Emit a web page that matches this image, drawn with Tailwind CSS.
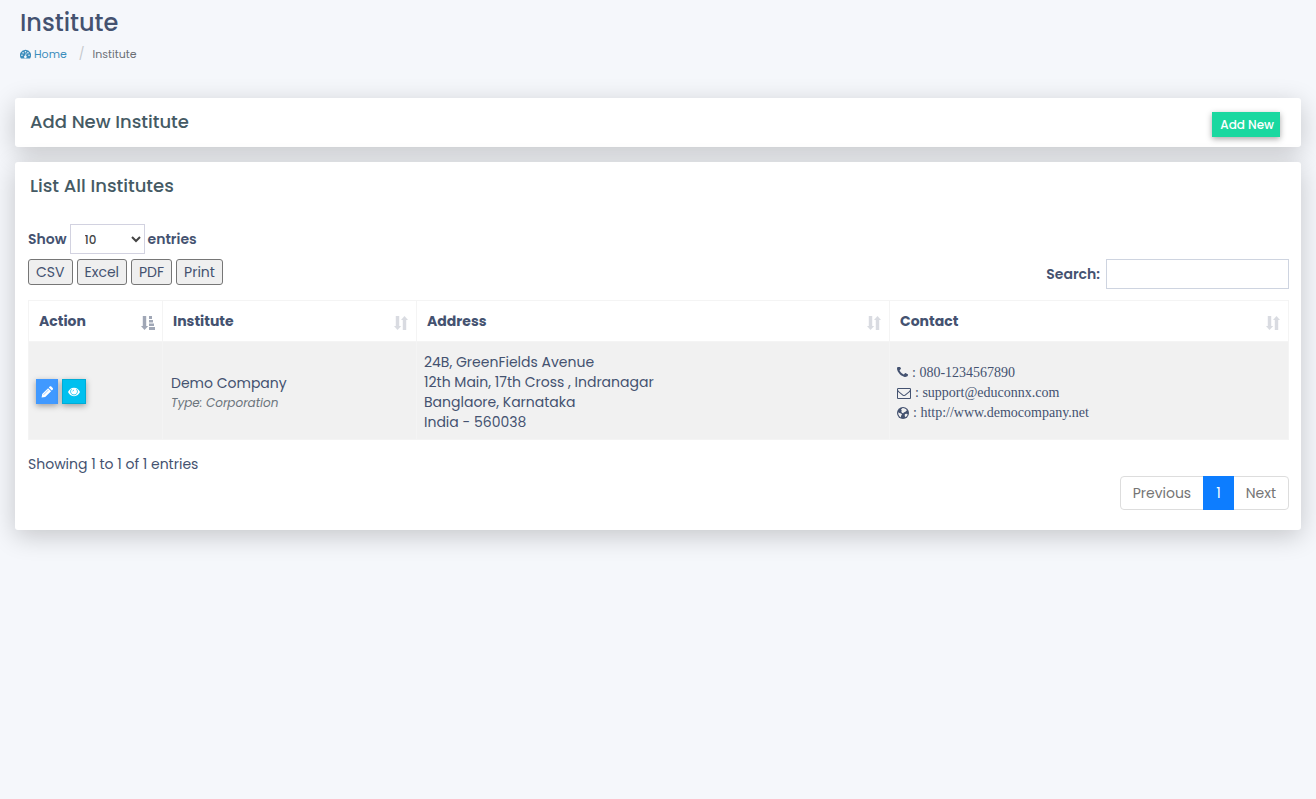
<!DOCTYPE html>
<html lang="en">
<head>
    <meta charset="UTF-8">
    <meta name="viewport" content="width=device-width, initial-scale=1.0">
    <title>Institute</title>
    <script src="https://cdn.jsdelivr.net/npm/@tailwindcss/browser@4"></script>
</head>
<body class="bg-[#f5f7fb] min-h-screen font-['Poppins','Inter',sans-serif] text-sm leading-5 text-[#445270]">
    <!-- Icons used more than once -->
    <svg class="hidden">
        <symbol id="sort" viewBox="0 0 14 14">
            <path d="M1.800 0h3.400v10h2L3.500 14 0 10h1.800zM8.800 14h3.400V4H14L10.500 0 7 4h1.800z"/>
        </symbol>
    </svg>

    <header class="px-5 pt-2 h-[98px]">
        <h1 class="text-2xl leading-[30px] font-medium">Institute</h1>
        <nav class="flex items-center mt-2 text-[11px] leading-4" aria-label="Breadcrumb">
            <a href="#" class="flex items-center gap-[3px] text-[#3c8dbc]">
                <svg class="w-[11px] h-[11px]" viewBox="0 0 14 14">
                    <path fill="currentColor" d="M7 1a7 7 0 0 0-6 10.700c.2.200.4.300.7.300h10.600c.3 0 .5-.1.700-.3A7 7 0 0 0 7 1z"/>
                    <g fill="#f5f7fb">
                        <circle cx="2.500" cy="8" r="1"/><circle cx="3.900" cy="4.900" r="1"/><circle cx="7" cy="3.500" r="1"/>
                        <circle cx="10.100" cy="4.900" r="1"/><circle cx="11.500" cy="8" r="1"/>
                        <path d="M7.400 5.300l1 .2-.7 3a1.700 1.700 0 1 1-1-.2z"/>
                    </g>
                </svg>
                Home
            </a>
            <span class="pl-3 pr-2 text-xs leading-4 text-[#c4c7cc]">/</span>
            <span class="text-[#6b6f76]">Institute</span>
        </nav>
    </header>

    <main class="px-[15px] flex flex-col gap-[15px]">
        <section class="bg-white rounded-[3px] shadow-[0_6px_26px_rgba(0,0,0,0.2)] flex items-start justify-between pl-[15px] pr-[21px] pt-[14px] pb-[10px]">
            <h2 class="text-lg leading-5 font-medium text-[#455a64]">Add New Institute</h2>
            <button class="bg-[#1ad8a0] text-white text-xs leading-[17px] font-medium pl-2 pr-[6px] py-1 shadow-[0_2px_6px_rgba(0,0,0,0.35)]">Add New</button>
        </section>

        <section class="bg-white rounded-[3px] shadow-[0_6px_26px_rgba(0,0,0,0.2)] pl-[13px] pr-3 pt-[14px] pb-5">
            <h2 class="text-lg leading-5 font-medium text-[#455a64] pl-0.5">List All Institutes</h2>

            <label class="flex items-center gap-[3px] mt-7 font-semibold">
                Show
                <select class="w-[75px] h-[30px] border border-[#d2d2e0] bg-white text-xs text-[#444] font-medium pl-[10px]">
                    <option>10</option>
                    <option>25</option>
                    <option>50</option>
                    <option>100</option>
                </select>
                entries
            </label>

            <div class="flex items-start justify-between mt-[5px]">
                <div class="flex gap-1">
                    <button class="h-[26px] px-[7px] border border-[#767676] rounded-[3px] bg-[#efefef]">CSV</button>
                    <button class="h-[26px] px-[7px] border border-[#767676] rounded-[3px] bg-[#efefef]">Excel</button>
                    <button class="h-[26px] px-[7px] border border-[#767676] rounded-[3px] bg-[#efefef]">PDF</button>
                    <button class="h-[26px] px-[7px] border border-[#767676] rounded-[3px] bg-[#efefef]">Print</button>
                </div>
                <label class="flex items-center gap-[6px] font-semibold">
                    Search:
                    <input type="search" class="w-[183px] h-[30px] border border-[#ced4e0] bg-white px-2">
                </label>
            </div>

            <table class="w-full table-fixed border-collapse mt-[11px] border border-[#f4f4f4]">
                <colgroup>
                    <col class="w-[134px]">
                    <col class="w-[254px]">
                    <col class="w-[473px]">
                    <col>
                </colgroup>
                <thead>
                    <tr class="h-[41px] text-left">
                        <th class="border border-[#f4f4f4] pl-[10px] pr-[7px] font-bold">
                            <div class="flex items-center justify-between">Action
                                <svg class="w-[14px] h-[14px] mt-1 opacity-50" viewBox="0 0 14 14" fill="currentColor">
                                    <path d="M1.800 0h3.400v10h2L3.500 14 0 10h1.800zM8 0h3v3H8zM8 4h4v2.500H8zM8 7.500h5V10H8zM8 11h6v3H8z"/>
                                </svg>
                            </div>
                        </th>
                        <th class="border border-[#f4f4f4] pl-[10px] pr-2 font-bold">
                            <div class="flex items-center justify-between">Institute
                                <svg class="w-[14px] h-[14px] mt-1 opacity-20" fill="currentColor"><use href="#sort"/></svg>
                            </div>
                        </th>
                        <th class="border border-[#f4f4f4] pl-[10px] pr-2 font-bold">
                            <div class="flex items-center justify-between">Address
                                <svg class="w-[14px] h-[14px] mt-1 opacity-20" fill="currentColor"><use href="#sort"/></svg>
                            </div>
                        </th>
                        <th class="border border-[#f4f4f4] pl-[10px] pr-2 font-bold">
                            <div class="flex items-center justify-between">Contact
                                <svg class="w-[14px] h-[14px] mt-1 opacity-20" fill="currentColor"><use href="#sort"/></svg>
                            </div>
                        </th>
                    </tr>
                </thead>
                <tbody>
                    <tr class="bg-[#f1f1f1]">
                        <td class="border border-[#f4f4f4] px-[7px] pt-[2px]">
                            <div class="flex gap-1">
                                <button aria-label="Edit" class="flex items-center justify-center w-[22px] h-[25px] bg-[#4099ff] text-white shadow-[0_2px_6px_rgba(0,0,0,0.35)]">
                                    <svg class="w-3 h-3" viewBox="0 0 12 12" fill="currentColor">
                                        <path d="M.6 11.600l.6-3.500 5.900-5.900 3 3-5.900 5.900zM7.800 1.500l.9-.9c.5-.5 1.100-.5 1.600 0l1.400 1.400c.5.500.5 1.100 0 1.600l-.9.900z"/>
                                        <path fill="none" stroke="#4099ff" stroke-width=".5" d="M2.600 8.800l4.800-4.800"/>
                                    </svg>
                                </button>
                                <button aria-label="View" class="flex items-center justify-center w-6 h-[25px] bg-[#00c0ef] border border-[#00acd6] text-white shadow-[0_2px_6px_rgba(0,0,0,0.35)]">
                                    <svg class="w-3 h-3" viewBox="0 0 12 12">
                                        <path fill="currentColor" d="M6 1.800C3 1.800 1 3.900 0 6c1 2.100 3 4.200 6 4.200s5-2.100 6-4.200c-1-2.100-3-4.200-6-4.200z"/>
                                        <path fill="none" stroke="#00c0ef" stroke-width=".8" d="M3.600 3.200C1.500 5 2.800 8.900 6 8.900s4.500-3.900 2.400-5.700"/>
                                        <path fill="none" stroke="#00c0ef" stroke-width=".7" d="M4.700 5.400c.1-.7.500-1.100 1.200-1.200"/>
                                    </svg>
                                </button>
                            </div>
                        </td>
                        <td class="border border-[#f4f4f4] px-2 pt-1">
                            <p>Demo Company</p>
                            <p class="text-xs leading-5 italic text-[#6c757d]">Type: Corporation</p>
                        </td>
                        <td class="border border-[#f4f4f4] px-[7px] pt-[10px] pb-[7px]">
                            24B, GreenFields Avenue<br>
                            12th Main, 17th Cross , Indranagar<br>
                            Banglaore, Karnataka<br>
                            India - 560038
                        </td>
                        <td class="border border-[#f4f4f4] px-[7px] pt-1 font-['Liberation_Serif',serif]">
                            <p class="flex items-center gap-1">
                                <svg class="w-[11px] h-[11px]" viewBox="192 256 1408 1408" fill="currentColor">
                                    <path d="M1600 1240q0 27-10 70.500t-21 68.500q-21 50-122 106-94 51-186 51-27 0-53-3.500t-57.500-12.500-47-14.500-55.500-20.500-49-18q-98-35-175-83-127-79-264-216t-216-264q-48-77-83-175-3-9-18-49t-20.500-55.500-14.500-47-12.500-57.500-3.500-53q0-92 51-186 56-101 106-122 25-11 68.500-21t70.500-10q14 0 21 3 18 6 53 76 11 19 30 54t35 63.500 31 53.500q3 4 17.500 25t21.500 35.500 7 28.500q0 20-28.500 50t-62 55-62 53-28.500 46q0 9 5 22.500t8.500 20.500 14 24 11.500 19q76 137 174 235t235 174q2 1 19 11.500t24 14 20.500 8.500 22.500 5q18 0 46-28.500t53-62 55-62 50-28.500q14 0 28.500 7t35.500 21.500 25 17.500q25 15 53.500 31t63.500 35 54 30q70 35 76 53 3 7 3 21z"/>
                                </svg>
                                : 080-1234567890
                            </p>
                            <p class="flex items-center gap-1">
                                <svg class="w-[14px] h-[14px]" viewBox="0 0 1792 1792" fill="currentColor">
                                    <path d="M1664 1504v-768q-32 36-69 66-268 206-426 338-51 43-83 67t-86.500 48.500-102.500 24.500h-2q-48 0-102.500-24.500t-86.500-48.500-83-67q-158-132-426-338-37-30-69-66v768q0 13 9.500 22.500t22.500 9.500h1472q13 0 22.500-9.500t9.500-22.500zm0-1051v-24.500l-.5-13-3-12.500-5.500-9-9-7.500-14-2.500h-1472q-13 0-22.500 9.500t-9.500 22.500q0 168 147 284 193 152 401 317 6 5 35 29.500t46 37.500 44.500 31.500 50.500 27.500 43 9h2q20 0 43-9t50.500-27.500 44.500-31.500 46-37.500 35-29.500q208-165 401-317 54-43 100.500-115.500t46.500-131.500zm128-37v1088q0 66-47 113t-113 47h-1472q-66 0-113-47t-47-113v-1088q0-66 47-113t113-47h1472q66 0 113 47t47 113z"/>
                                </svg>
                                : support@educonnx.com
                            </p>
                            <p class="flex items-center gap-1">
                                <svg class="w-3 h-3" viewBox="0 0 12 12">
                                    <circle cx="6" cy="6" r="6" fill="currentColor"/>
                                    <path fill="#f1f1f1" d="M5.600 1.100l1.500.1 1.700.8 1.300 1.400-1 .3-.8 1.200-1.300.3-.7 1-1.200-.2-.8-1.200.5-1.300-.9-.8zM1.100 5.200l1.300.9 1.700.4.900 1.100-.9 1.200-.2 1.600-1.500-1.200-1-1.700zM7.900 7.100l1.900-.3.900.6-.8 1.700-1.400 1.100-.8-1.300z"/>
                                </svg>
                                : http://www.democompany.net
                            </p>
                        </td>
                    </tr>
                </tbody>
            </table>

            <p class="mt-[14px]">Showing 1 to 1 of 1 entries</p>

            <nav class="flex justify-end mt-[2px] text-[#757575]" aria-label="Pagination">
                <a href="#" class="h-[34px] px-3 py-[6px] border border-[#ddd] rounded-l">Previous</a>
                <a href="#" class="relative z-10 -ml-px h-[34px] px-3 py-[6px] border border-[#0d7dff] bg-[#0d7dff] text-white">1</a>
                <a href="#" class="-ml-px h-[34px] px-3 py-[6px] border border-[#ddd] rounded-r">Next</a>
            </nav>
        </section>
    </main>
</body>
</html>
